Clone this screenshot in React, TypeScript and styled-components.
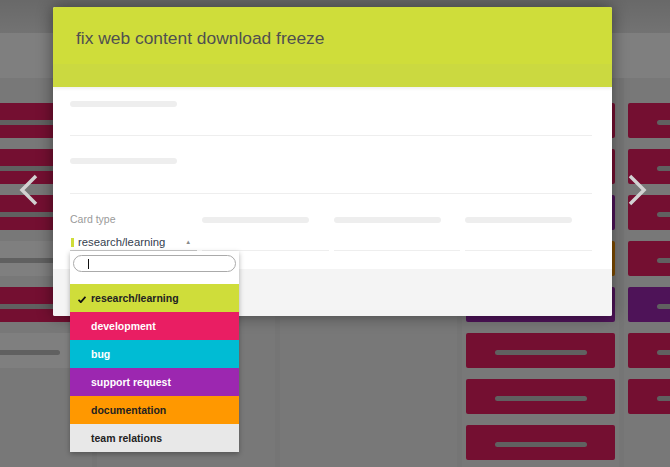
import React from 'react'
import styled, { createGlobalStyle } from 'styled-components'

const GlobalStyle = createGlobalStyle`
  *, *::before, *::after {
    box-sizing: border-box;
  }
  html, body {
    margin: 0;
    padding: 0;
    font-family: "Liberation Sans", Arial, sans-serif;
  }
`

type CardKind = 'dev' | 'bug' | 'support' | 'docs' | 'plain'

const cardColors: Record<CardKind, string> = {
  dev: '#e91e63',
  bug: '#00bcd4',
  support: '#9c27b0',
  docs: '#ff9800',
  plain: '#ffffff',
}

const columns: CardKind[][] = [
  ['dev', 'dev', 'dev', 'plain', 'dev', 'plain'],
  [],
  [],
  ['dev', 'dev', 'support', 'docs', 'support', 'dev', 'dev', 'dev'],
  ['dev', 'dev', 'dev', 'dev', 'support', 'dev', 'dev'],
]

const options = [
  { label: 'research/learning', bg: '#cfdd3a', fg: '#222', selected: true },
  { label: 'development', bg: '#e91e63', fg: '#fff' },
  { label: 'bug', bg: '#00bcd4', fg: '#fff' },
  { label: 'support request', bg: '#9c27b0', fg: '#fff' },
  { label: 'documentation', bg: '#ff9800', fg: '#222' },
  { label: 'team relations', bg: '#e8e8e8', fg: '#222' },
]

function App() {
  return (
    <>
      <GlobalStyle />
      <Page>
        <TopBar />
        <SubBar />
        <Board>
          {columns.map((cards, i) => (
            <Column key={i} wide={cards.length === 0}>
              {cards.map((kind, j) => (
                <Card key={j} color={cardColors[kind]}>
                  <CardBar />
                </Card>
              ))}
            </Column>
          ))}
        </Board>

        <Overlay />

        <NavArrow side="left">
          <svg width="20" height="32" viewBox="0 0 20 32">
            <polyline points="17,2 3,16 17,30" fill="none" stroke="#d2d2d2" strokeWidth="3.5" />
          </svg>
        </NavArrow>
        <NavArrow side="right">
          <svg width="20" height="32" viewBox="0 0 20 32">
            <polyline points="3,2 17,16 3,30" fill="none" stroke="#d2d2d2" strokeWidth="3.5" />
          </svg>
        </NavArrow>

        <Modal>
          <Header>
            <Title>fix web content download freeze</Title>
          </Header>
          <HeaderBand />
          <Body>
            <Field top={14} size={49}>
              <Placeholder />
            </Field>
            <Field top={22} size={58}>
              <Placeholder />
            </Field>
            <CardRow>
              <SelectCol>
                <Label>Card type</Label>
                <SelectBox>
                  <Swatch />
                  <SelectText>research/learning</SelectText>
                  <Caret>▲</Caret>
                </SelectBox>
                <Dropdown>
                  <Search>
                    <TextCaret />
                  </Search>
                  <OptionList>
                    {options.map((o) => (
                      <Option key={o.label} bg={o.bg} fg={o.fg}>
                        {o.selected && (
                          <Check width="8" height="7" viewBox="0 0 8 7">
                            <path d="M0.5 3.8 L2.8 6.2 L7.5 0.8" fill="none" stroke="#111" strokeWidth="1.8" />
                          </Check>
                        )}
                        {o.label}
                      </Option>
                    ))}
                  </OptionList>
                </Dropdown>
              </SelectCol>
              {[0, 1, 2].map((i) => (
                <FieldCol key={i}>
                  <Placeholder />
                </FieldCol>
              ))}
            </CardRow>
          </Body>
          <Footer />
        </Modal>
      </Page>
    </>
  )
}

export default App

const Page = styled.div`
  position: relative;
  width: 670px;
  height: 467px;
  overflow: hidden;
  background: #eaeaea;
  display: flex;
  flex-direction: column;
`

const TopBar = styled.div`
  height: 33px;
  flex-shrink: 0;
  background: linear-gradient(#d2d2d2, #e6e6e6);
`

const SubBar = styled.div`
  height: 45px;
  flex-shrink: 0;
  background: #ffffff;
`

const Board = styled.div`
  flex: 1;
  display: flex;
  gap: 5px;
  margin-left: -65px;
`

const Column = styled.div<{ wide?: boolean }>`
  flex-shrink: 0;
  width: ${(p) => (p.wide ? '177.5px' : '157px')};
  background: #f1f1f1;
  padding: 25px 4px 0;
  display: flex;
  flex-direction: column;
  gap: 11px;
`

const Card = styled.div<{ color: string }>`
  height: 35px;
  border-radius: 2px;
  background: ${(p) => p.color};
  display: flex;
  align-items: center;
  justify-content: center;
  padding-top: 4px;
`

const CardBar = styled.div`
  width: 92px;
  height: 5px;
  border-radius: 3px;
  background: #c0c0c0;
`

const Overlay = styled.div`
  position: absolute;
  inset: 0;
  background: rgba(0, 0, 0, 0.5);
`

const NavArrow = styled.div<{ side: 'left' | 'right' }>`
  position: absolute;
  top: 174px;
  ${(p) => (p.side === 'left' ? 'left: 19px;' : 'left: 627px;')}
  width: 20px;
  height: 32px;
`

const Modal = styled.div`
  position: absolute;
  left: 53px;
  top: 7px;
  width: 559px;
  display: flex;
  flex-direction: column;
  background: #fff;
  border-radius: 2px;
  box-shadow: 0 0 16px rgba(0, 0, 0, 0.45);
`

const Header = styled.div`
  height: 57px;
  background: #cfdd3a;
  padding-left: 23px;
  display: flex;
  align-items: center;
  border-radius: 2px 2px 0 0;
`

const Title = styled.h1`
  margin: 0;
  font-weight: 400;
  font-size: 17.4px;
  color: #505050;
  padding-top: 6px;
`

const HeaderBand = styled.div`
  height: 23px;
  background: #cbd940;
  box-shadow: 0 2px 3px rgba(0, 0, 0, 0.06);
  position: relative;
  z-index: 1;
`

const Body = styled.div`
  height: 182px;
  padding: 0 20px 0 17px;
  display: flex;
  flex-direction: column;
  position: relative;
  z-index: 2;
`

const Field = styled.div<{ top: number; size: number }>`
  padding-top: ${(p) => p.top}px;
  height: ${(p) => p.size}px;
  flex-shrink: 0;
  border-bottom: 1px solid #eeeeee;
`

const Placeholder = styled.div`
  width: 107px;
  height: 6px;
  border-radius: 3px;
  background: #eeeeee;
`

const CardRow = styled.div`
  display: grid;
  grid-template-columns: repeat(4, 1fr);
  gap: 5px;
  padding-top: 19px;
`

const SelectCol = styled.div`
  position: relative;
  display: flex;
  flex-direction: column;
`

const FieldCol = styled.div`
  display: flex;
  flex-direction: column;
  padding-top: 4px;
  height: 38px;
  border-bottom: 1px solid #eeeeee;
`

const Label = styled.div`
  font-size: 10.5px;
  line-height: 12px;
  color: #9a9a9a;
`

const SelectBox = styled.div`
  margin-top: 9px;
  height: 17px;
  display: flex;
  align-items: center;
  border-bottom: 1px solid #c8c8c8;
`

const Swatch = styled.span`
  width: 3px;
  height: 9px;
  margin-left: 1px;
  background: #cfdd3a;
`

const SelectText = styled.span`
  margin-left: 4px;
  font-size: 11.3px;
  color: #34404e;
`

const Caret = styled.span`
  margin-left: 20px;
  font-size: 6px;
  color: #8a8a8a;
`

const Dropdown = styled.div`
  position: absolute;
  top: 38px;
  left: 0;
  width: 169px;
  background: #fff;
  box-shadow: 0 2px 5px rgba(0, 0, 0, 0.3);
  padding-top: 4px;
  z-index: 5;
`

const Search = styled.div`
  margin: 0 3px;
  height: 17px;
  border: 1px solid #aaaaaa;
  border-radius: 9px;
  display: flex;
  align-items: center;
  padding-left: 14px;
`

const TextCaret = styled.span`
  width: 1px;
  height: 10px;
  background: #111;
`

const OptionList = styled.ul`
  list-style: none;
  margin: 12px 0 0;
  padding: 0;
`

const Option = styled.li<{ bg: string; fg: string }>`
  position: relative;
  height: 28px;
  line-height: 28px;
  padding-left: 21px;
  background: ${(p) => p.bg};
  color: ${(p) => p.fg};
  font-size: 10.5px;
  font-weight: 700;
`

const Check = styled.svg`
  position: absolute;
  left: 8px;
  top: 12px;
`

const Footer = styled.div`
  height: 47px;
  background: #f4f4f4;
  border-radius: 0 0 2px 2px;
`
